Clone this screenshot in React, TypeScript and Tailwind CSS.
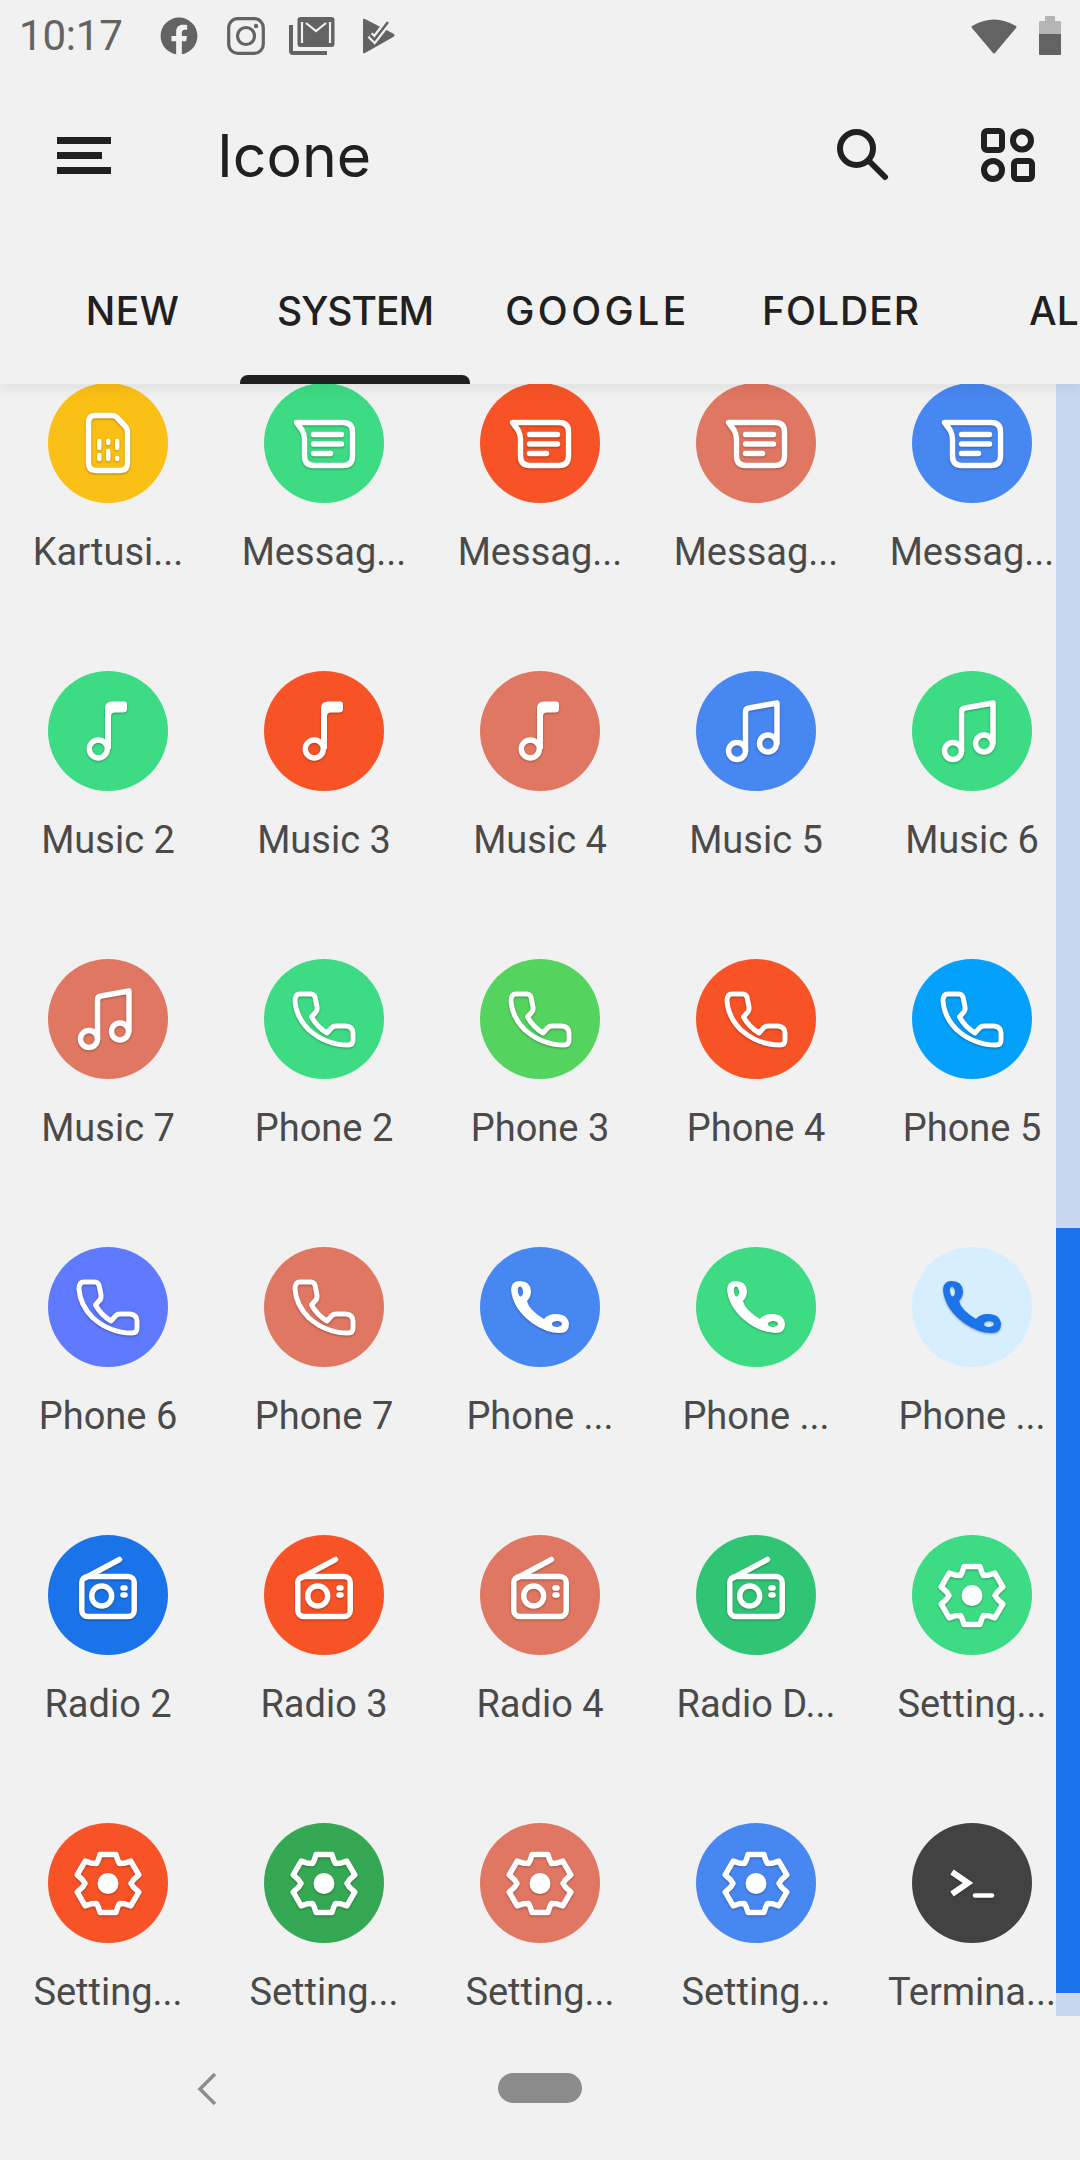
import React from 'react'
import { FaFacebook } from 'react-icons/fa'

type IconName = 'sim' | 'message' | 'note' | 'notes' | 'phone' | 'handset' | 'radio' | 'gear' | 'terminal'

const GREEN = '#3ddc84'
const ORANGE = '#f85327'
const SALMON = '#e07762'
const BLUE = '#4787f2'

// 6 teeth gear outline, centered in the 120 box. side teeth stick out a bit more
const gearOutline = (() => {
  const pts: string[] = []
  for (let i = 0; i < 6; i++) {
    const a = (Math.PI / 3) * i - Math.PI / 2
    const dx = Math.cos(a)
    const dy = Math.sin(a)
    const tip = i % 3 === 0 ? 29 : 31
    const p = (r: number, o: number) =>
      `${(60 + r * dx - o * dy).toFixed(1)} ${(60.5 + r * dy + o * dx).toFixed(1)}`
    const v = a + Math.PI / 6
    pts.push(p(24, -9.5), p(tip, -8), p(tip, 8), p(24, 9.5))
    pts.push(`${(60 + 23 * Math.cos(v)).toFixed(1)} ${(60.5 + 23 * Math.sin(v)).toFixed(1)}`)
  }
  return 'M' + pts.join('L') + 'Z'
})()

const AppGlyph: React.FC<{ name: IconName; color: string }> = ({ name, color }) => {
  const line = { fill: 'none', stroke: color, strokeWidth: 5.5, strokeLinecap: 'round', strokeLinejoin: 'round' } as const
  return (
    <svg viewBox="0 0 120 120" className="w-[120px] h-[120px] drop-shadow-[0_1.5px_1px_rgba(0,0,0,0.3)]">
      {name === 'sim' && (
        <g {...line}>
          <path d="M47 32.5H64Q67 32.5 69 34.5L77 43Q79.5 45.5 79.5 49V80Q79.5 87.5 72 87.5H48Q40.5 87.5 40.5 80V40Q40.5 32.5 47 32.5Z" />
          <path strokeWidth={4.5} d="M51.3 58V65M60.3 58V60M69.2 58V65M51.3 72V76M60.3 68V76M69.2 75V76" />
        </g>
      )}
      {name === 'message' && (
        <g {...line}>
          <path d="M32.5 39.5H79Q88.5 39.5 88.5 49V73Q88.5 82.5 79 82.5H50Q40.5 82.5 40.5 73V56Q40.5 51 38 47Z" />
          <path d="M49.5 51.5H77.5M49.5 61H77.5M49.5 70.5H66.5" />
        </g>
      )}
      {name === 'note' && (
        <g>
          <circle cx="50.3" cy="78" r="9" fill="none" stroke={color} strokeWidth={5.5} />
          <path fill={color} d="M57 78V37Q57 30.5 64 30.5H76.5Q79 30.5 79 33V38Q79 41.5 75 41.5H67Q63 41.5 63 45V78Z" />
        </g>
      )}
      {name === 'notes' && (
        <g {...line}>
          <circle cx="41" cy="80" r="8.5" />
          <circle cx="72" cy="72.5" r="8.5" />
          <path d="M49.5 80V41Q49.5 37.5 53 37L81 32V72" />
        </g>
      )}
      {name === 'phone' && (
        <path
          {...line}
          strokeWidth={5}
          d="M36 35H46Q50 35 51 38L53 48Q53.5 52 51 54L47.5 58Q53 68 63 74L67 69.5Q69 67 72 67L82 67Q89 68 89 74V81Q89 86 84 86Q62 86 45 71Q32 58 31 42Q31 35 36 35Z"
        />
      )}
      {name === 'handset' && (
        <path
          fill={color}
          fillRule="evenodd"
          d="M40 34Q50 34 51 44Q51 50 47 54Q49 63 64 72Q68 67 76 67Q88 67 89 77Q89 86 80 86Q66 86 52 76Q33 62 31 43Q31 34 40 34ZM40 39.5Q37 40 38 45Q39 50 41 49.5Q43.5 48 43 44Q42 39.5 40 39.5ZM72 77Q72 80 77 80Q82 79.5 82 76.5Q81 74 77 74Q72 74.5 72 77Z"
        />
      )}
      {name === 'radio' && (
        <g {...line}>
          <path d="M71.5 24.5L37 43" />
          <rect x="33.8" y="41.5" width="52.4" height="40" rx="6" />
          <circle cx="53.7" cy="61" r="10" />
          <path d="M75 53H77M75 60H77" />
        </g>
      )}
      {name === 'gear' && (
        <g>
          <path {...line} d={gearOutline} />
          <circle cx="60" cy="60.5" r="10.5" fill={color} />
        </g>
      )}
      {name === 'terminal' && (
        <g {...line}>
          <path strokeWidth={6} strokeLinecap="butt" strokeLinejoin="miter" d="M40 49L56 60L40 71" />
          <path strokeWidth={4.5} d="M63 72.5H80" />
        </g>
      )}
    </svg>
  )
}

type Item = { label: string; bg: string; icon: IconName; fg?: string }

const items: Item[] = [
  { label: 'Kartusi...', bg: '#fbc015', icon: 'sim' },
  { label: 'Messag...', bg: GREEN, icon: 'message' },
  { label: 'Messag...', bg: ORANGE, icon: 'message' },
  { label: 'Messag...', bg: SALMON, icon: 'message' },
  { label: 'Messag...', bg: BLUE, icon: 'message' },

  { label: 'Music 2', bg: GREEN, icon: 'note' },
  { label: 'Music 3', bg: ORANGE, icon: 'note' },
  { label: 'Music 4', bg: SALMON, icon: 'note' },
  { label: 'Music 5', bg: BLUE, icon: 'notes' },
  { label: 'Music 6', bg: GREEN, icon: 'notes' },

  { label: 'Music 7', bg: SALMON, icon: 'notes' },
  { label: 'Phone 2', bg: GREEN, icon: 'phone' },
  { label: 'Phone 3', bg: '#54d45f', icon: 'phone' },
  { label: 'Phone 4', bg: ORANGE, icon: 'phone' },
  { label: 'Phone 5', bg: '#03a1fc', icon: 'phone' },

  { label: 'Phone 6', bg: '#5f79ff', icon: 'phone' },
  { label: 'Phone 7', bg: SALMON, icon: 'phone' },
  { label: 'Phone ...', bg: BLUE, icon: 'handset' },
  { label: 'Phone ...', bg: GREEN, icon: 'handset' },
  { label: 'Phone ...', bg: '#d7eeff', icon: 'handset', fg: '#1a73e8' },

  { label: 'Radio 2', bg: '#1a73e8', icon: 'radio' },
  { label: 'Radio 3', bg: ORANGE, icon: 'radio' },
  { label: 'Radio 4', bg: SALMON, icon: 'radio' },
  { label: 'Radio D...', bg: '#30c574', icon: 'radio' },
  { label: 'Setting...', bg: GREEN, icon: 'gear' },

  { label: 'Setting...', bg: ORANGE, icon: 'gear' },
  { label: 'Setting...', bg: '#34a853', icon: 'gear' },
  { label: 'Setting...', bg: SALMON, icon: 'gear' },
  { label: 'Setting...', bg: BLUE, icon: 'gear' },
  { label: 'Termina...', bg: '#424242', icon: 'terminal' },
]

const tabs = [
  { label: 'NEW', box: 'w-[215px]', text: 'tracking-[0.5px]' },
  { label: 'SYSTEM', box: 'w-[230px]', text: 'tracking-[-1px]' },
  { label: 'GOOGLE', box: 'w-[255px]', text: 'tracking-[3.5px]' },
  { label: 'FOLDER', box: 'w-[232px]', text: 'tracking-[1px]' },
  { label: 'ALL', box: 'w-[216px]', text: 'tracking-normal' },
]

const StatusBar = () => (
  <div className="h-[72px] flex items-center pl-[19px] pr-[19px] text-[#636363]">
    <span className="text-[42px] leading-none w-[141px] tracking-[-0.2px]">10:17</span>
    <FaFacebook size={38} className="text-[#636363]" />
    {/* instagram */}
    <svg viewBox="0 0 38 38" className="w-[38px] h-[38px] ml-[29px]" fill="none" stroke="#636363">
      <rect x="1.7" y="1.7" width="34.6" height="34.6" rx="9" strokeWidth="3.2" />
      <circle cx="19" cy="19" r="8.5" strokeWidth="3.2" />
      <circle cx="29" cy="9" r="2.2" fill="#636363" stroke="none" />
    </svg>
    {/* inbox stack */}
    <svg viewBox="0 0 46 38" className="w-[46px] h-[38px] ml-[24px]">
      <path d="M2 8V34Q2 36 4 36H38" fill="none" stroke="#636363" strokeWidth="4" />
      <rect x="8.5" y="0" width="37" height="30" rx="3" fill="#636363" />
      <path d="M13 5V26M41 5V26M17 6L27 14L37 6" fill="none" stroke="#f1f1f1" strokeWidth="2.2" />
    </svg>
    {/* play tasks */}
    <svg viewBox="0 0 34 38" className="w-[34px] h-[38px] ml-[27px]">
      <path d="M1 3Q1 1 3 2L32 17Q33 18 32 19.5L3 36Q1 37 1 35Z" fill="#636363" />
      <path d="M8 18L12.5 22.5L26 5" fill="none" stroke="#f1f1f1" strokeWidth="7" />
      <path d="M8 18L12.5 22.5L26 5" fill="none" stroke="#636363" strokeWidth="2.5" />
    </svg>
    <div className="flex-1" />
    <svg viewBox="0 0 46 38" className="w-[46px] h-[38px]">
      <path d="M1 9Q23 -4 45 9Q46 10 45 11L24 36Q23 37 22 36L1 11Q0 10 1 9Z" fill="#636363" />
    </svg>
    <svg viewBox="0 0 22 40" className="w-[22px] h-[40px] ml-[22px]">
      <path d="M6 0H16V5H21Q22 5 22 6V18H0V6Q0 5 1 5H6Z" fill="#b5b5b5" />
      <path d="M0 18H22V38Q22 39 21 39H1Q0 39 0 38Z" fill="#636363" />
    </svg>
  </div>
)

const Toolbar = () => (
  <div className="h-[166px] flex items-center text-[#202020]">
    <div className="w-[217px] pl-[57px]">
      <div className="w-[54px] flex flex-col gap-[8px]">
        <div className="h-[7px] bg-[#202020]" />
        <div className="h-[7px] w-[45px] bg-[#202020]" />
        <div className="h-[7px] bg-[#202020]" />
      </div>
    </div>
    <h1 className="font-['Inter',sans-serif] text-[59px] leading-none font-normal flex-1">Icone</h1>
    <svg viewBox="0 0 52 52" className="w-[52px] h-[52px]" fill="none" stroke="#202020" strokeWidth="6">
      <circle cx="19.5" cy="19.5" r="16.5" />
      <path d="M32 32L48 48" strokeLinecap="round" />
    </svg>
    <svg viewBox="0 0 54 54" className="w-[54px] h-[54px] ml-[92px] mr-[45px]" fill="none" stroke="#202020" strokeWidth="6">
      <rect x="3" y="3" width="18" height="19" rx="3" />
      <circle cx="41" cy="12.5" r="9" />
      <circle cx="12" cy="42" r="9" />
      <rect x="33" y="33" width="18" height="18" rx="3" />
    </svg>
  </div>
)

const TabBar = () => (
  <div className="h-[106px] flex pl-[25px] overflow-hidden">
    {tabs.map((t) => (
      <div key={t.label} className={`relative shrink-0 ${t.box} flex justify-center pt-[3px]`}>
        <span className={`font-['Inter',sans-serif] text-[39px] leading-[60px] font-medium text-[#202020] whitespace-nowrap ${t.text}`}>
          {t.label}
        </span>
        {t.label === 'SYSTEM' && <div className="absolute left-0 right-0 bottom-0 h-[9px] bg-[#202020] rounded-t-[8px]" />}
      </div>
    ))}
  </div>
)

export default function App() {
  return (
    <div className="w-[1080px] h-[2160px] flex flex-col overflow-hidden bg-[#f1f1f1] font-['Roboto',sans-serif]">
      <div className="relative z-10 h-[384px] bg-[#f1f1f1] shadow-[0_4px_14px_rgba(0,0,0,0.08)] shrink-0">
        <StatusBar />
        <Toolbar />
        <div className="mt-[40px]">
          <TabBar />
        </div>
      </div>

      <div className="relative h-[1632px] overflow-hidden">
        <div className="grid grid-cols-[repeat(5,216px)] -mt-px">
          {items.map((it, i) => (
            <div key={i} className="h-[288px] flex flex-col items-center">
              <div
                className="w-[120px] h-[120px] rounded-full shrink-0"
                style={{ backgroundColor: it.bg }}
              >
                <AppGlyph name={it.icon} color={it.fg ?? '#ffffff'} />
              </div>
              <span className="mt-[25px] text-[38px] leading-[48px] text-[#4a4a4a] whitespace-nowrap">{it.label}</span>
            </div>
          ))}
        </div>

        {/* scrollbar overlay */}
        <div className="absolute top-0 right-0 bottom-0 w-[24px] bg-[#c9d8f0]">
          <div className="absolute left-0 right-0 top-[844px] h-[765px] bg-[#1a73e8]" />
        </div>
      </div>

      <div className="flex-1 relative flex items-start pt-[57px]">
        <svg viewBox="0 0 20 32" className="w-[20px] h-[32px] ml-[197px]" fill="none" stroke="#8c8c8c" strokeWidth="3.5">
          <path d="M18 1L3 16L18 31" />
        </svg>
        <div className="w-[84px] h-[30px] ml-[281px] rounded-[15px] bg-[#8c8c8c]" />
      </div>
    </div>
  )
}
